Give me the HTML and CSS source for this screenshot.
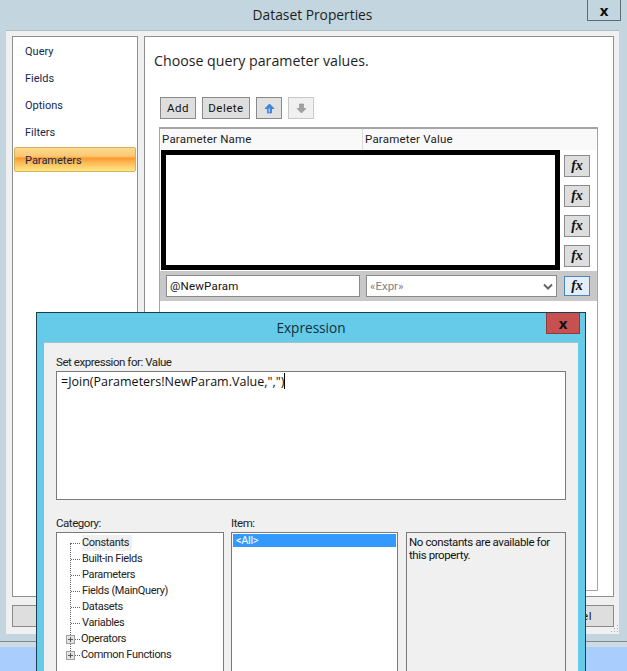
FILE: index.html
```html
<!DOCTYPE html>
<html lang="en">
<head>
<meta charset="utf-8">
<title>Dataset Properties</title>
<link rel="stylesheet" href="styles.css">
</head>
<body>
<div class="desktop">
  <section class="win props">
    <header class="props-title">
      <span>Dataset Properties</span>
      <button class="close-btn">x</button>
    </header>
    <div class="props-client">
      <div class="props-main">
        <nav class="side">
          <div class="side-item">Query</div>
          <div class="side-item">Fields</div>
          <div class="side-item">Options</div>
          <div class="side-item">Filters</div>
          <div class="side-item active">Parameters</div>
        </nav>
        <main class="panel">
          <h1 class="panel-head">Choose query parameter values.</h1>
          <div class="toolbar">
            <button class="btn btn-add">Add</button>
            <button class="btn btn-del">Delete</button>
            <button class="btn btn-arrow"><svg width="11" height="11" viewBox="0 0 11 11"><path d="M5.5 1 10 5.5H7.5V10H3.5V5.5H1Z" fill="#3a86e6" stroke="#2a66b8" stroke-width=".6"/><path d="M4.5 5.5H6V9.5H4.5Z" fill="#a9d0fa"/></svg></button>
            <button class="btn btn-arrow off"><svg width="11" height="11" viewBox="0 0 11 11"><path d="M5.5 10 10 5.5H7.5V1H3.5V5.5H1Z" fill="#a0a0a0" stroke="#8f8f8f" stroke-width=".6"/></svg></button>
          </div>
          <div class="grid-box">
            <div class="grid-head">
              <div class="col-name">Parameter Name</div>
              <div class="col-value">Parameter Value</div>
            </div>
            <div class="grid-body">
              <div class="black-box"></div>
              <div class="fx-col">
                <button class="fx">fx</button>
                <button class="fx">fx</button>
                <button class="fx">fx</button>
                <button class="fx">fx</button>
              </div>
            </div>
            <div class="edit-row">
              <div class="field name-field">@NewParam</div>
              <div class="field value-field"><span>«Expr»</span><svg width="10" height="7" viewBox="0 0 10 7"><path d="M1 1.5 5 5.5 9 1.5" fill="none" stroke="#666" stroke-width="2"/></svg></div>
              <button class="fx fx-focus">fx</button>
            </div>
          </div>
        </main>
      </div>
      <footer class="props-foot">
        <button class="btn foot-btn">Help</button>
        <button class="btn foot-btn">Cancel</button>
      </footer>
      <svg class="grip" width="9" height="9" viewBox="0 0 9 9"><path d="M7 1h1v1H7zM4 4h1v1H4zM7 4h1v1H7zM1 7h1v1H1zM4 7h1v1H4zM7 7h1v1H7z" fill="#9fb0b8"/></svg>
    </div>
  </section>

  <section class="win expr">
    <header class="expr-title">
      <span>Expression</span>
      <button class="close-btn red">x</button>
    </header>
    <div class="expr-client">
      <label class="lbl">Set expression for: Value</label>
      <div class="code">=Join(Parameters!NewParam.Value,",")<span class="caret"></span></div>
      <div class="pickers">
        <div class="pick pick-cat">
          <label class="lbl">Category:</label>
          <div class="box tree">
            <div class="tree-row sel"><span>Constants</span></div>
            <div class="tree-row"><span>Built-in Fields</span></div>
            <div class="tree-row"><span>Parameters</span></div>
            <div class="tree-row"><span>Fields (MainQuery)</span></div>
            <div class="tree-row"><span>Datasets</span></div>
            <div class="tree-row"><span>Variables</span></div>
            <div class="tree-row has-kids"><i class="plus"></i><span>Operators</span></div>
            <div class="tree-row has-kids"><i class="plus"></i><span>Common Functions</span></div>
          </div>
        </div>
        <div class="pick pick-item">
          <label class="lbl">Item:</label>
          <div class="box items"><div class="item-sel">&lt;All&gt;</div></div>
        </div>
        <div class="pick pick-desc">
          <label class="lbl">&nbsp;</label>
          <div class="box desc">No constants are available for this property.</div>
        </div>
      </div>
    </div>
  </section>
</div>
</body>
</html>
```
FILE: styles.css
```css
* { box-sizing: border-box; }
html, body { margin: 0; height: 671px; overflow: hidden; }
body { background: #a9cdfd; font-family: "Roboto", "Noto Sans", sans-serif; font-size: 11px; color: #111; }
.desktop { position: relative; width: 627px; height: 671px; overflow: hidden; }
button { font-family: inherit; padding: 0; cursor: default; }
.win { position: absolute; }

/* Dataset Properties window */
.props { left: 0; top: 0; width: 627px; height: 647px; background: #c3d5de; border-bottom: 5px solid #cfdbe1; }
.props::after { content: ""; position: absolute; left: 0; right: 0; bottom: 0; height: 1px; background: #7f8a90; }
.props-title { height: 30px; display: flex; align-items: center; justify-content: center; font-family: "Open Sans", sans-serif; font-size: 13.8px; color: #1e1e1e; padding: 0 2px 1px 0; }
.close-btn { position: absolute; top: 0; right: 6px; width: 34px; height: 21px; border: 1px solid #5d6c74; border-top: 0; background: #c3d5de; font-family: "Open Sans", sans-serif; font-size: 15px; font-weight: 700; line-height: 17px; color: #111; }
.props-client { position: relative; margin: 0 8px 0 6px; height: 604px; background: #f0f0f0; border-top: 1px solid #aebcc4; padding: 5px 5px 0 6px; display: flex; flex-direction: column; }
.props-main { display: flex; gap: 6px; height: 561px; }
.side { width: 126px; background: #fff; border: 1px solid #8f8f8f; padding: 1px 1px 0; display: flex; flex-direction: column; }
.side-item { height: 27px; padding-left: 11px; line-height: 27px; color: #14284e; }
.side-item.active { margin-top: 1px; height: 25px; line-height: 25px; border: 1px solid #d4b25c; border-radius: 2px; padding-left: 10px; background: linear-gradient(#fdd98e 0%, #fcc872 35%, #fb9a2e 45%, #fdb34e 60%, #ffe98b 100%); }
.panel { flex: 1; background: #fff; border: 1px solid #8f8f8f; padding: 0 14px; }
.panel-head { margin: 14px 0 0 -5px; height: 20px; font-family: "Open Sans", sans-serif; font-size: 14.2px; font-weight: 400; line-height: 20px; color: #1e1e1e; }
.toolbar { display: flex; gap: 6px; margin: 26px 0 0 1px; }
.btn { height: 22px; background: #dedede; border: 1px solid #8a8a8a; font-size: 11.5px; color: #111; letter-spacing: .5px; }
.btn-add { width: 36px; }
.btn-del { width: 48px; }
.btn-arrow { width: 26px; background: #e1e1e1; display: flex; align-items: center; justify-content: center; }
.btn-arrow.off { background: #f0f0f0; border-color: #c8c8c8; }
.grid-box { margin: 8px 0 0 0; height: 464px; width: 439px; border: 1px solid #a5a5a5; border-top-width: 2px; }
.grid-head { display: flex; height: 21px; background: #f9f9f9; color: #222; font-size: 11.5px; letter-spacing: .2px; line-height: 21px; padding-left: 2px; }
.col-name { width: 201px; border-right: 1px solid #dcdcdc; }
.col-value { padding-left: 2px; }
.grid-body { display: flex; height: 121px; padding-left: 1px; }
.black-box { width: 399px; height: 120px; border: 5px solid #000; background: #fff; }
.fx-col { margin-left: 4px; padding-top: 5px; display: flex; flex-direction: column; gap: 8px; }
.fx { width: 26px; height: 22px; background: #dedede; border: 1px solid #8a8a8a; font-family: "Liberation Serif", serif; font-style: italic; font-weight: 700; font-size: 14px; line-height: 18px; color: #111; }
.edit-row { height: 30px; background: #c8c8c8; display: flex; align-items: center; padding-left: 6px; }
.field { height: 22px; background: #fff; border: 1px solid #8a8a8a; font-size: 11.5px; line-height: 20px; padding-left: 3px; }
.name-field { width: 194px; letter-spacing: .2px; }
.value-field { width: 191px; margin-left: 6px; color: #808080; display: flex; justify-content: space-between; align-items: center; padding-right: 3px; }
.fx-focus { margin-left: 7px; height: 20px; background: #e3eef8; border-color: #4a86b8; line-height: 16px; }
.props-foot { display: flex; justify-content: space-between; margin-top: 8px; }
.foot-btn { width: 82px; height: 22px; }
.grip { position: absolute; right: 0; bottom: 1px; }

/* Expression dialog */
.expr { left: 36px; top: 312px; width: 550px; height: 380px; background: #65cbe9; border: 1px solid #15404f; border-bottom: 0; padding: 0 7px; }
.expr-title { height: 29px; display: flex; align-items: center; justify-content: center; font-family: "Open Sans", sans-serif; font-size: 13.6px; color: #10303c; }
.close-btn.red { top: 0; right: 5px; width: 34px; height: 21px; background: #c75050; border-color: #8e3a3a; }
.expr-client { height: 350px; background: #f0f0f0; padding: 11px 12px 0 12px; border-top: 1px solid #9ec4d2; }
.lbl { display: block; height: 17px; line-height: 17px; color: #222; font-size: 11.5px; letter-spacing: -.45px; }
.code { height: 129px; background: #fff; border: 1px solid #7a7a7a; padding: 1px 4px; font-family: "Open Sans", sans-serif; font-size: 12.5px; line-height: 18px; color: #111; }
.caret { display: inline-block; width: 1px; height: 16px; background: #000; vertical-align: -3px; }
.pickers { display: flex; margin-top: 15px; }
.pick-cat { width: 168px; }
.pick-item { width: 167px; margin-left: 7px; }
.pick-desc { width: 160px; margin-left: 8px; }
.box { height: 200px; background: #fff; border: 1px solid #7a7a7a; font-size: 11px; letter-spacing: -.35px; color: #222; }
.tree { position: relative; padding-top: 2px; }
.tree::before { content: ""; position: absolute; left: 13px; top: 10px; height: 112px; border-left: 1px dotted #666; }
.tree-row { position: relative; height: 16px; line-height: 16px; padding-left: 25px; }
.tree-row::before { content: ""; position: absolute; left: 14px; width: 9px; top: 8px; border-top: 1px dotted #666; }
.tree-row.sel span { background: #f0f0f0; display: inline-block; padding-right: 3px; }
.tree-row.has-kids { padding-left: 24px; }
.plus { position: absolute; z-index: 1; left: 9px; top: 4px; width: 9px; height: 9px; background: linear-gradient(#555,#555) center/5px 1px no-repeat, linear-gradient(#555,#555) center/1px 5px no-repeat, #e4e4e4; border: 1px solid #a0a0a0; }
.items { padding: 1px; }
.item-sel { height: 13px; line-height: 13px; background: #3399ff; color: #fff; padding-left: 3px; }
.desc { background: #f0f0f0; padding: 3px 2px; line-height: 13px; font-size: 11.5px; letter-spacing: -.4px; color: #111; }
```
